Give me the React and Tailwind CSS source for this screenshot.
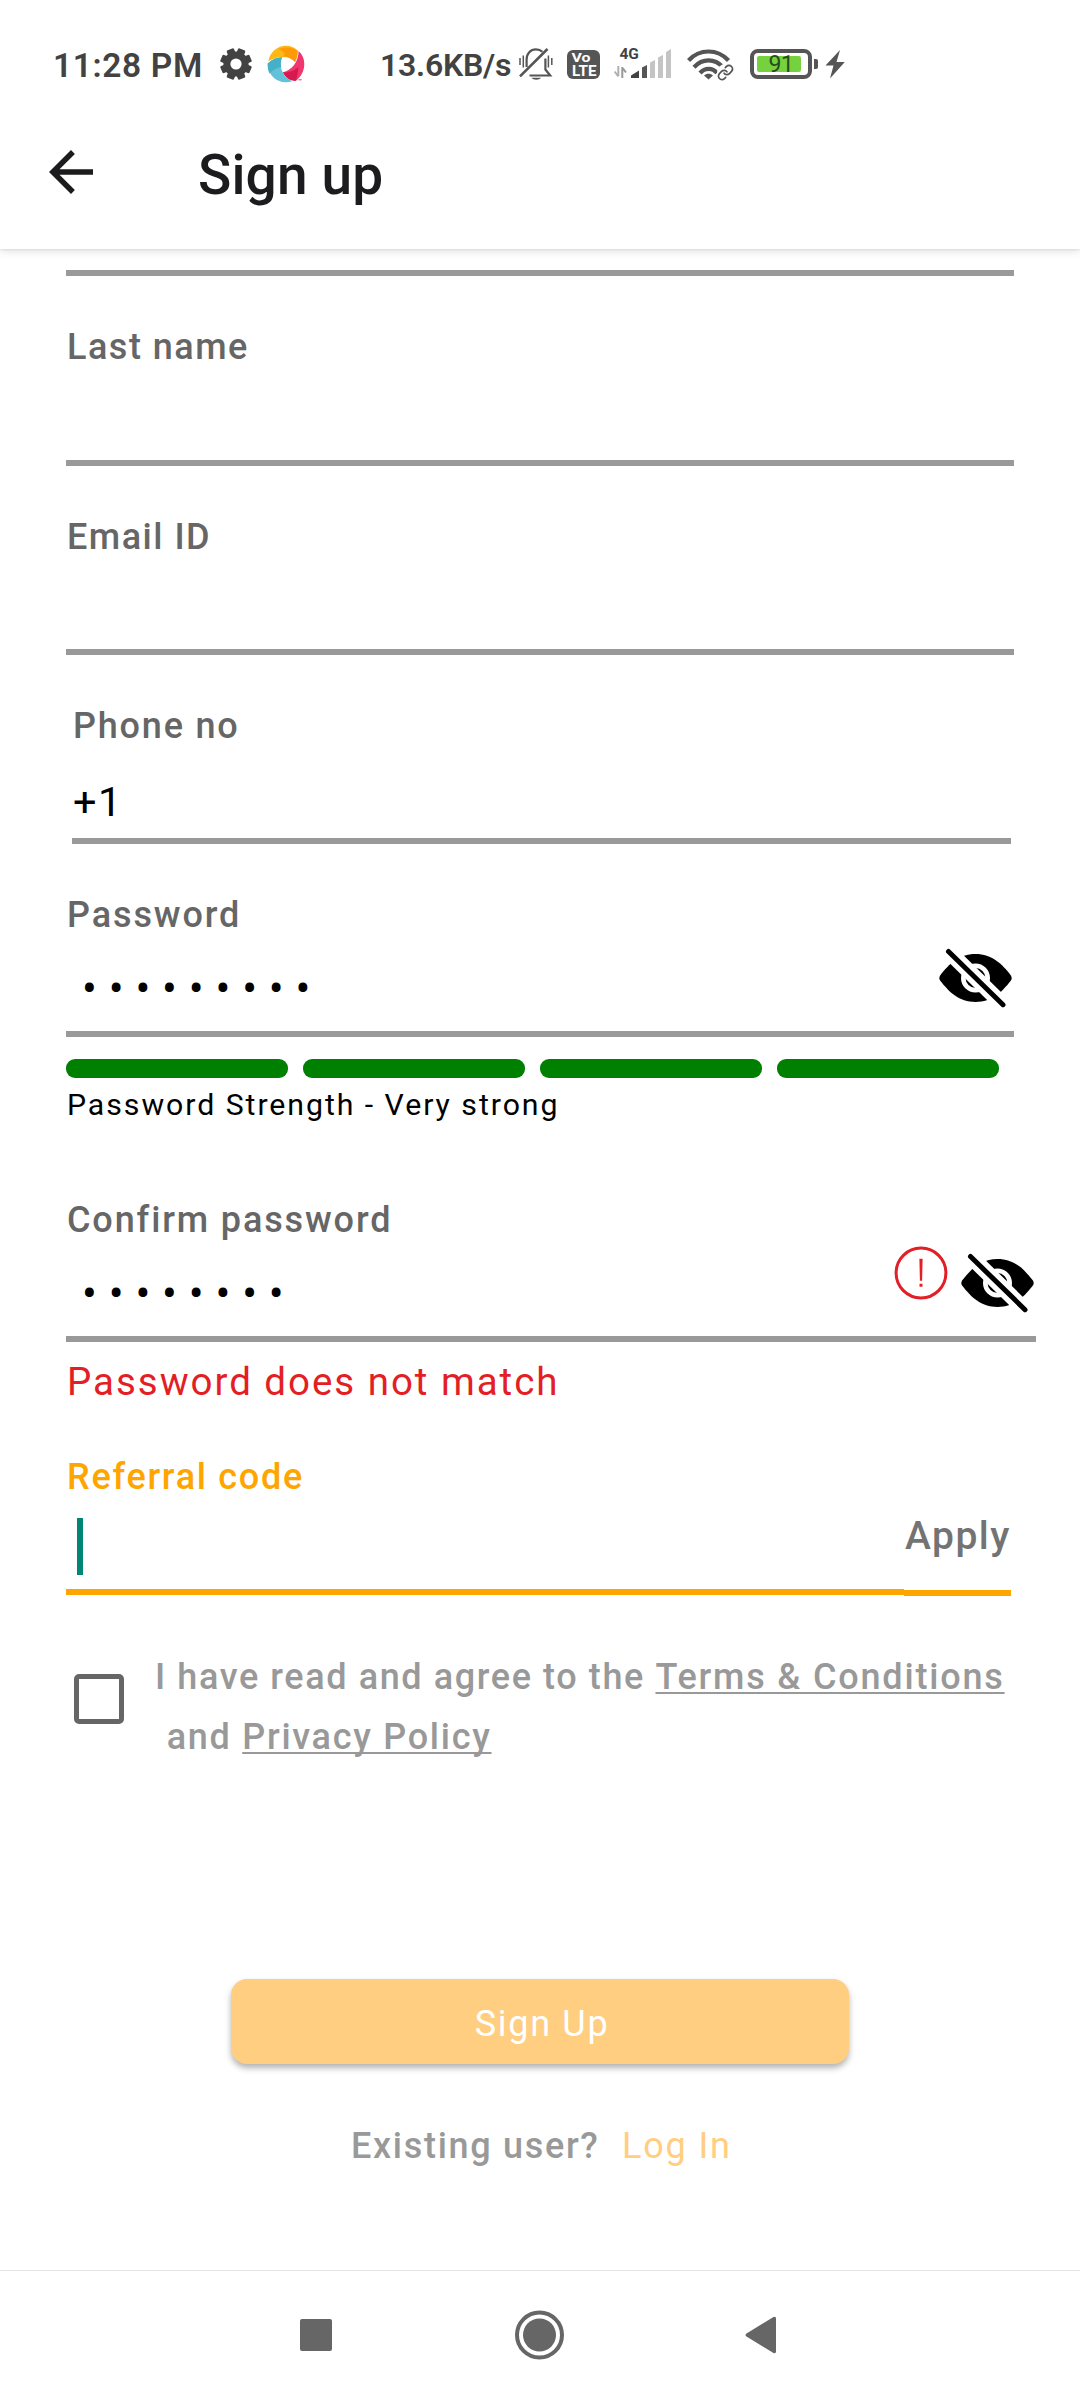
import React from "react";
import { Link as LinkIcon } from "lucide-react";

function GearIcon() {
  return (
    <svg className="mt-[48px] h-[32px] w-[32px] shrink-0" viewBox="-16 -16 32 32">
      <g fill="#424242">
        {[22.5, 67.5, 112.5, 157.5].map((a) => (
          <rect key={a} x="-3.9" y="-15.8" width="7.8" height="31.6" rx="1.4" transform={`rotate(${a})`} />
        ))}
        <circle r="12.6" />
      </g>
      <circle r="5.600" fill="#fff" />
    </svg>
  );
}

function SwirlLogo() {
  return (
    <svg className="mt-[45px] ml-[15px] h-[38px] w-[38px] shrink-0" viewBox="0 0 38 38">
      <path d="M1.4 16.2C3 7 10.5.8 19 .8c4.600 0 8.800 1.600 11.600 4.700C30.800 9.500 30 13.500 28 17 23 11.500 14 9.500 1.400 16.200Z" fill="#fdb913" />
      <path d="M11 4C18 1.500 25 2 30.600 5.500 30.800 9.500 30 13.500 28 17 24.500 13 20.500 11.600 16 11.300 20 8.500 16 6 11 4Z" fill="#ff9a06" />
      <path d="M31.600 6C35.500 9.500 37.300 14 37.300 19c0 7-3.500 13-8.300 16.700C23 36 18.500 33 16 27.300 25 25 31.500 17 31.600 6Z" fill="#f0356f" />
      <path d="M16 27.300c5.500 1 11-1.500 15.500-5.300-.5 5.500-1.500 10-2.500 13.700C23 36 18.500 33 16 27.300Z" fill="#d41a4e" />
      <path d="M.7 18.500C5 14.500 10 12.300 15.200 12.300 11.500 19 14 31.500 25.500 36.200 12 40.500.200 31 .700 18.500Z" fill="#62c2da" />
      <path d="M.7 18.500C5 14.500 10 12.300 15.200 12.300c-1.500 3-1.700 6.200-1 9.700C9 23 5 26 2.500 28.500 1.200 25.500.5 22 .700 18.500Z" fill="#45b0c8" />
      <path d="M31.500 34.300h3.200v1h-3.200z" fill="#f0356f" />
    </svg>
  );
}

function MutedBellIcon() {
  return (
    <svg className="mt-[48px] h-[33px] w-[34px] shrink-0" viewBox="0 0 34 33" fill="none" stroke="#555" strokeWidth="2.200">
      <path d="M7.600 19V11.500C7.600 5.500 11.500 1.300 17 1.300c2.600 0 4.800.9 6.400 2.500" />
      <path d="M26.400 10.500V21.500l4.800 6H10.500" />
      <path d="M1 28.300 28.500 1" strokeWidth="2.600" />
      <path d="M12.500 29.800h9.500c-1.500 2.500-8 2.500-9.500 0Z" fill="#555" stroke="none" />
      <path d="M1 10v7M4.300 7.500v12M29.400 7.500v12M32.800 10v7" strokeWidth="1.500" />
    </svg>
  );
}

function VolteBadge() {
  return (
    <svg className="mt-[50px] ml-[14px] h-[29px] w-[33px] shrink-0" viewBox="0 0 33 29">
      <rect width="33" height="29" rx="6" fill="#555" />
      <g fill="#fff" className="font-[Roboto] font-bold">
        <text x="4.500" y="12.300" fontSize="13" textLength="19" lengthAdjust="spacingAndGlyphs">Vo</text>
        <text x="5" y="25.700" fontSize="14" textLength="24.500" lengthAdjust="spacingAndGlyphs">LTE</text>
      </g>
    </svg>
  );
}

function MobileSignal() {
  return (
    <svg className="mt-[46px] ml-[14px] h-[33px] w-[58px] shrink-0" viewBox="0 0 58 33">
      <text x="5.400" y="12.800" fontSize="15.500" fill="#424242" className="font-[Roboto] font-bold">4G</text>
      <g fill="none" stroke="#b0b0b0" strokeWidth="2">
        <path d="M4.300 20v10M0.600 25.500l3.700 5" />
        <path d="M8.300 32V21M8.300 21.500l3.700 5" stroke="#999" />
      </g>
      <path d="M17 32v-2.500l8-5V32z" fill="#424242" />
      <path d="M28 32V21.500l5-2.500v13z" fill="#555" />
      <path d="M36 32V16.500l5-2.500v18zM44 32V11.500L49 9v23zM52 32V6l5-3v29z" fill="#c4c4c4" />
    </svg>
  );
}

function WifiIcon() {
  return (
    <div className="relative mt-[48px] ml-[15px] h-[34px] w-[48px] shrink-0">
      <svg className="h-[34px] w-[44px]" viewBox="0 0 44 34" fill="none" stroke="#555" strokeWidth="4.200">
        <path d="M1.500 12.500C12.500.5 30.500.5 41.500 12.500" />
        <path d="M7 19.200c8.500-9 20.500-9 29 0" />
        <path d="M13 25c5-5.500 12.500-5.500 17 0" />
        <path d="M21.500 31.500 17 27.500c2.500-2.500 6.500-2.500 9 0z" fill="#555" stroke="none" />
      </svg>
      <div className="absolute top-[16px] left-[30px] h-[17px] w-[17px] rounded-full bg-white">
        <LinkIcon className="h-[17px] w-[17px]" color="#555" strokeWidth={2.4} />
      </div>
    </div>
  );
}

function Battery() {
  return (
    <div className="mt-[49px] ml-[15px] flex shrink-0">
      <div className="flex h-[30px] w-[62px] items-center rounded-[8px] border-4 border-[#555] px-[3px]">
        <div className="flex h-[16px] w-[44px] items-center justify-center rounded-[2px] bg-[#76d13f] pt-px pl-[4px] text-[23px] leading-none tracking-[-0.5px] text-[#2b4a1b]">91</div>
      </div>
      <div className="mt-[10px] ml-[2px] h-[10px] w-[4px] rounded-r-[2px] bg-[#555]" />
      <svg className="mt-px ml-[7px] h-[28px] w-[20px]" viewBox="0 0 20 28" fill="#555">
        <path d="M15 0 0.500 15.500h8L5 28.500 19.800 12h-8.300z" />
      </svg>
    </div>
  );
}

function StatusBar() {
  return (
    <div className="flex h-[98px] pl-[53px] text-[#424242]">
      <div className="mt-[46px] w-[167px] shrink-0 text-[33.5px] leading-[39px] font-semibold tracking-[0.64px] whitespace-nowrap">11:28 PM</div>
      <GearIcon />
      <SwirlLogo />
      <div className="mt-[46px] ml-[75px] w-[139px] shrink-0 text-[32px] leading-[38px] font-semibold tracking-[-0.25px] whitespace-nowrap">13.6KB/s</div>
      <MutedBellIcon />
      <VolteBadge />
      <MobileSignal />
      <WifiIcon />
      <Battery />
    </div>
  );
}

function AppBar() {
  return (
    <div className="flex h-[151px] pl-[38px]">
      <svg className="mt-[41px] h-[66px] w-[66px]" viewBox="0 0 24 24" fill="#1c1c1e">
        <path d="M20 11H7.830l5.590-5.590L12 4l-8 8 8 8 1.410-1.410L7.830 13H20v-2z" />
      </svg>
      <h1 className="mt-[45px] ml-[94px] text-[55px] leading-[64px] font-medium tracking-[0.150px] text-[#1c1c1e]">Sign up</h1>
    </div>
  );
}

function EyeOffIcon() {
  return (
    <svg className="h-[60px] w-[74px] shrink-0" viewBox="0 0 74 60">
      <path d="M1.300 27.200C10 16 20 6 36.500 6S63 16 71.700 27.200Q73.700 30 71.700 32.800C63 44 53 54 36.500 54S10 44 1.300 32.800Q-.7 30 1.300 27.200Z" />
      <circle cx="36.500" cy="30" r="12.200" fill="none" stroke="#fff" strokeWidth="4.600" />
      <path d="M4-2 70 62.600" stroke="#fff" strokeWidth="15.400" />
      <path d="M9.500 3.500 64 56.700" stroke="#000" strokeWidth="5" strokeLinecap="round" />
    </svg>
  );
}

function ErrorIcon() {
  return (
    <svg className="h-[54px] w-[54px] shrink-0" viewBox="0 0 54 54">
      <circle cx="27" cy="27" r="24.900" fill="none" stroke="#e31e24" strokeWidth="3" />
      <path d="M25.400 12.700h3.200l-.5 22h-2.200zM25.500 37.700h3v3h-3z" fill="#e31e24" />
    </svg>
  );
}

const LABEL = "text-[36px] leading-[42px] font-medium whitespace-nowrap";

function Field({ label, labelClass, className, children }) {
  return (
    <div className={`relative border-b-[6px] border-[#999] pt-[50px] ${className}`}>
      <div className={`${LABEL} ml-px text-[#666] ${labelClass}`}>{label}</div>
      {children}
    </div>
  );
}

function Masked({ value }) {
  return <div className="mt-[27px] ml-[16px] text-[44px] leading-[52px] tracking-[11.850px] whitespace-nowrap text-black">{value}</div>;
}

export default function App() {
  return (
    <div className="flex h-[2400px] w-[1080px] flex-col overflow-hidden bg-white font-[Roboto,sans-serif] text-black">
      <header className="relative z-10 bg-white shadow-[0_1px_2px_rgba(0,0,0,0.08),0_3px_8px_rgba(0,0,0,0.1)]">
        <StatusBar />
        <AppBar />
      </header>

      <main className="pl-[66px]">
        <div className="mt-[21px] h-[6px] w-[948px] bg-[#999]" />
        <Field label="Last name" labelClass="tracking-[1.500px]" className="h-[190px] w-[948px]" />
        <Field label="Email ID" labelClass="tracking-[1.500px]" className="h-[189px] w-[948px]" />
        <Field label="Phone no" labelClass="tracking-[1.800px]" className="ml-[6px] h-[189px] w-[939px]">
          <div className="mt-[31px] ml-px text-[41.500px] leading-[48px] tracking-[1.400px]">+1</div>
        </Field>
        <Field label="Password" labelClass="tracking-[1.900px]" className="h-[193px] w-[948px]">
          <Masked value="•••••••••" />
          <div className="absolute right-[1px] bottom-[23px]">
            <EyeOffIcon />
          </div>
        </Field>

        <div className="mt-[22px] flex gap-[15px]">
          {[0, 1, 2, 3].map((i) => (
            <div key={i} className="h-[19px] w-[222px] rounded-[9px] bg-[#008000]" />
          ))}
        </div>
        <div className="mt-[9px] ml-px text-[30.250px] leading-[35px] tracking-[1.950px]">Password Strength - Very strong</div>

        <Field label="Confirm password" labelClass="tracking-[1.870px]" className="mt-[27px] h-[193px] w-[970px]">
          <Masked value="••••••••" />
          <div className="absolute right-[1px] bottom-[23px] flex gap-[13px]">
            <div className="-mt-[7px]">
              <ErrorIcon />
            </div>
            <EyeOffIcon />
          </div>
        </Field>
        <div className="mt-[17px] ml-px text-[38.500px] leading-[45px] tracking-[1.970px] text-[#e31e24]">Password does not match</div>

        <div className="mt-[2px] flex h-[190px]">
          <div className="h-[189px] w-[838px] border-b-[6px] border-[#ffa500] pt-[50px]">
            <div className={`${LABEL} ml-px tracking-[1.720px] text-[#ffa500]`}>Referral code</div>
            <div className="mt-[20px] ml-[11px] h-[57px] w-[6px] bg-[#008577]" />
          </div>
          <div className="h-[190px] w-[107px] border-b-[6px] border-[#ffa500] pt-[108px]">
            <div className="ml-px text-[39px] leading-[45px] font-medium tracking-[1.500px] whitespace-nowrap text-[#737373]">Apply</div>
          </div>
        </div>

        <div className="mt-[51px] flex pl-[8px]">
          <div className="mt-[27px] h-[50px] w-[50px] shrink-0 rounded-[5px] border-[5.500px] border-[#666]" />
          <div className="ml-[31px] text-[36px] leading-[60px] font-medium whitespace-nowrap text-[#999]">
            <p>
              <span className="tracking-[1.600px]">I have read and agree to the{" "}</span>
              <a className="tracking-[1.800px] underline decoration-2 underline-offset-[3px] [text-decoration-skip-ink:none]">Terms &amp; Conditions</a>
            </p>
            <p className="pl-px tracking-[1.720px]">
              &nbsp;and{" "}
              <a className="underline decoration-2 underline-offset-[3px] [text-decoration-skip-ink:none]">Privacy Policy</a>
            </p>
          </div>
        </div>
      </main>

      <button className="mt-[212px] ml-[231px] h-[85px] w-[618px] shrink-0 rounded-[16px] bg-[#ffce80] pl-[4px] text-[36px] leading-[42px] tracking-[1.700px] text-white shadow-[0_4px_6px_rgba(0,0,0,0.3)]">
        <span className="relative top-[2px]">Sign Up</span>
      </button>

      <div className="mt-[61px] ml-[351px] flex text-[36px] leading-[42px]">
        <span className="w-[271px] shrink-0 font-medium tracking-[1.700px] whitespace-nowrap text-[#999]">Existing user?</span>
        <a className="tracking-[1.850px] whitespace-nowrap text-[#ffce80]">Log In</a>
      </div>

      <nav className="mt-auto flex h-[130px] shrink-0 items-center border-t border-[#e4e4e4] pb-[2px] pl-[300px]">
        <div className="h-[32px] w-[32px] rounded-[2px] bg-[#666]" />
        <svg className="ml-[182px] h-[50px] w-[50px]" viewBox="0 0 50 50">
          <circle cx="25.500" cy="25" r="22.500" fill="none" stroke="#666" strokeWidth="4" />
          <circle cx="25.500" cy="25" r="16.500" fill="#666" />
        </svg>
        <svg className="ml-[181px] h-[38px] w-[32px]" viewBox="0 0 32 38">
          <path d="M1.500 17.500 28.500 1q2.500-1 2.500 1.500v33q0 2.500-2.500 1.500L1.500 20.500q-2-1.500 0-3Z" fill="#666" />
        </svg>
      </nav>
    </div>
  );
}
